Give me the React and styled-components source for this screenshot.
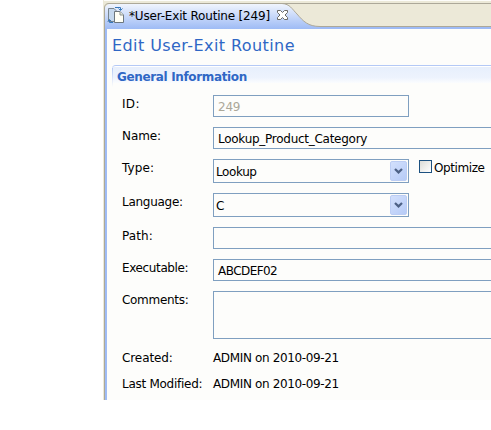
import React from "react";
import styled, { createGlobalStyle } from "styled-components";

const GlobalStyle = createGlobalStyle`
  * { box-sizing: border-box; }
  body {
    margin: 0;
    background: #fff;
    overflow: hidden;
    color: #000;
    font: 12px/14px "DejaVu Sans", Verdana, sans-serif;
  }
`;

const Editor = styled.main`
  width: 388px;
  height: 400px;
  margin-left: 103px;
  overflow: hidden;
  display: flex;
  flex-direction: column;
  background: #fdfdfb;
  border-left: 1px solid #ece9d8;
`;

const TabBar = styled.header`
  position: relative;
  isolation: isolate;
  flex: none;
  height: 29px;
  display: flex;
  align-items: flex-start;
  padding: 9px 0 0 25px;
`;

const TabShape = styled.svg`
  position: absolute;
  inset: 0;
  z-index: -1;
`;

const TabIcon = styled.svg`
  position: absolute;
  left: 3px;
  top: 6px;
`;

const CloseIcon = styled.svg`
  margin: 1px 0 0 7px;
`;

const Text = styled.span`
  white-space: pre;
  letter-spacing: ${(p) => p.$track || 0}px;
`;

const Body = styled.div`
  flex: 1;
  border-left: 1px solid #aca899;
  padding: 7px 0 0 7px;
  box-shadow: inset 2px 0 #9ebbf5;
`;

const Title = styled.h1`
  margin: 0;
  height: 29px;
  font-size: 16px;
  line-height: 19px;
  font-weight: 400;
  color: #2f67c5;
  letter-spacing: 0.42px;
  white-space: nowrap;
`;

const SectionHeader = styled.h2`
  position: relative;
  margin: 0;
  height: 20px;
  padding: 4px 0 0 5px;
  border-top: 1px solid #b4c9f6;
  border-top-left-radius: 4px;
  background: linear-gradient(#fff 1px, #e7effc 1px, #edf3fd 60%, #fbfcfe 17px, #fdfdfb 17px);
  font-size: 12px;
  line-height: 14px;
  color: #2f67c5;
  letter-spacing: -0.35px;

  &::before {
    content: "";
    position: absolute;
    left: 0;
    top: 2px;
    width: 1px;
    height: 19px;
    background: linear-gradient(#b4c9f6, #fdfdfb);
  }
`;

const Form = styled.div`
  display: flex;
  flex-direction: column;
  gap: 10px;
  margin-top: 10px;
  padding-left: 10px;
`;

const Row = styled.div`
  display: grid;
  grid-template-columns: 91px auto 1fr;
  align-items: start;
`;

const Label = styled.label`
  padding-top: 2px;
  white-space: nowrap;
  letter-spacing: ${(p) => p.$track || 0}px;
`;

const Field = styled.div`
  width: ${(p) => (p.$wide ? 300 : 196)}px;
  height: ${(p) => p.$height || 22}px;
  border: 1px solid #7f9fc0;
  padding: 4px 0 0 4px;
  color: ${(p) => (p.$disabled ? "#aca899" : "#000")};
`;

const Select = styled.div`
  width: 196px;
  height: 24px;
  border: 1px solid #7f9fc0;
  padding: 1px 1px 1px 2px;
  display: flex;
  justify-content: space-between;
`;

const SelectValue = styled(Text)`
  padding-top: 4px;
`;

const SelectButton = styled.span`
  width: 17px;
  height: 20px;
  border-radius: 2px;
  border: 1px solid #bccdf4;
  background: linear-gradient(135deg, #d3e0fc, #b6cbf7);
  display: flex;
  align-items: center;
  justify-content: center;
`;

const Value = styled(Text)`
  padding-top: 2px;
`;

const CheckLabel = styled.label`
  display: flex;
  margin: 1px 0 0 10px;
`;

const CheckBox = styled.span`
  width: 13px;
  height: 13px;
  margin-right: 2px;
  border: 1px solid #1c5180;
  background: linear-gradient(135deg, #dcdcd7, #fff);
`;

const CheckText = styled(Text)`
  padding-top: 1px;
`;

function EditorTab() {
  return (
    <TabBar>
      <TabShape width="387" height="29">
        <defs>
          <linearGradient id="tab" x1="0" y1="0" x2="0" y2="1">
            <stop offset="0" stopColor="#f2f6fe" />
            <stop offset="1" stopColor="#9ebbf5" />
          </linearGradient>
        </defs>
        <path d="M0 1H387V29H0Z" fill="#ece9d8" />
        <path d="M0 29V8L5 3.5H178C186 4 188 9 193 14C199 21 204 26.5 216 26.5H387V29Z" fill="url(#tab)" />
        <path d="M216 27H387V29H216Z" fill="#9ebbf5" />
        <path d="M.5 29V8Q.5 3.5 5 3.5H387M178 3.5C186 4 188 9 193 14C199 21 204 26.5 216 26.5H387" fill="none" stroke="#aca899" />
      </TabShape>
      <TabIcon width="18" height="18" viewBox="0 0 18 18">
        <path d="M1.5 2.5H7L10.5 6V15.5H1.5Z" fill="#c5d8ee" stroke="#79858d" />
        <path d="M7.5 5.5H13L16.5 9V16.5H7.5Z" fill="#fffff6" stroke="#6d777e" />
        <path d="M13 5.5V9H16.5" fill="#e5e6dd" stroke="#8b9291" />
        <path d="M8 1.5H13.5V4M11.5 2.5L13.5 4.5L15.5 2.5M6 16.5H2.5V14M.7 15.5L2.5 13.5L4.5 15.5" fill="none" stroke="#3979bb" />
      </TabIcon>
      <Text $track={-0.18}>*User-Exit Routine [249]</Text>
      <CloseIcon width="11" height="10" viewBox="0 0 11 10">
        <path
          d="M.5 .5H3.5L5.5 2.5L7.5 .5H10.5V2.5L8 5L10.5 7.5V9.5H7.5L5.5 7.5L3.5 9.5H.5V7.5L3 5L.5 2.5Z"
          fill="#fff"
          stroke="#6b6b68"
        />
      </CloseIcon>
    </TabBar>
  );
}

function Dropdown({ children, track }) {
  return (
    <Select>
      <SelectValue $track={track}>{children}</SelectValue>
      <SelectButton>
        <svg width="9" height="6" viewBox="0 0 9 6">
          <path d="M1 1L4.5 4.4L8 1" fill="none" stroke="#4d6185" strokeWidth="2.2" />
        </svg>
      </SelectButton>
    </Select>
  );
}

export default function App() {
  return (
    <>
      <GlobalStyle />
      <Editor>
        <EditorTab />
        <Body>
          <Title>Edit User-Exit Routine</Title>
          <SectionHeader>General Information</SectionHeader>
          <Form>
            <Row>
              <Label $track={0.3}>ID:</Label>
              <Field $disabled><Text $track={-0.2}>249</Text></Field>
            </Row>
            <Row>
              <Label $track={-0.1}>Name:</Label>
              <Field $wide><Text $track={-0.27}>Lookup_Product_Category</Text></Field>
            </Row>
            <Row>
              <Label $track={0.1}>Type:</Label>
              <Dropdown track={-0.4}>Lookup</Dropdown>
              <CheckLabel>
                <CheckBox />
                <CheckText $track={-0.4}>Optimize</CheckText>
              </CheckLabel>
            </Row>
            <Row>
              <Label $track={-0.28}>Language:</Label>
              <Dropdown>C</Dropdown>
            </Row>
            <Row>
              <Label $track={0.1}>Path:</Label>
              <Field $wide />
            </Row>
            <Row>
              <Label $track={-0.37}>Executable:</Label>
              <Field $wide><Text $track={-0.55}>ABCDEF02</Text></Field>
            </Row>
            <Row>
              <Label $track={-0.3}>Comments:</Label>
              <Field $wide $height={48} />
            </Row>
            <Row>
              <Label $track={-0.1}>Created:</Label>
              <Value $track={-0.36}>ADMIN on 2010-09-21</Value>
            </Row>
            <Row>
              <Label $track={-0.27}>Last Modified:</Label>
              <Value $track={-0.36}>ADMIN on 2010-09-21</Value>
            </Row>
          </Form>
        </Body>
      </Editor>
    </>
  );
}
